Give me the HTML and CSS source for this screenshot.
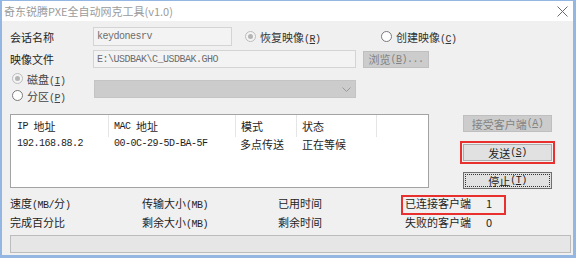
FILE: index.html
```html
<!DOCTYPE html>
<html>
<head>
<meta charset="utf-8">
<title>奇东锐腾PXE全自动网克工具</title>
<link rel="stylesheet" href="styles.css">
</head>
<body>
<div class="window">
  <div class="titlebar">
    <span class="title">奇东锐腾PXE全自动网克工具(v1.0)</span>
    <svg class="close" width="11" height="11" viewBox="0 0 11 11"><path d="M0.5 0.5 L10.5 10.5 M10.5 0.5 L0.5 10.5" stroke="#6a6a6a" stroke-width="1" fill="none"/></svg>
  </div>
  <div class="client">
    <div class="row r1">
      <span class="label">会话名称</span>
      <div class="edit w1"><span class="m">keydonesrv</span></div>
      <div class="radio rd-restore"><span class="dot dis checked"></span><span>恢复映像<span class="m">(<u>R</u>)</span></span></div>
      <div class="radio"><span class="dot"></span><span>创建映像<span class="m">(<u>C</u>)</span></span></div>
    </div>
    <div class="row r2">
      <span class="label">映像文件</span>
      <div class="edit w2"><span class="m">E:\USDBAK\C_USDBAK.GHO</span></div>
      <div class="btn disabled browse">浏览<span class="m">(<u>B</u>)...</span></div>
    </div>
    <div class="row r3">
      <div class="radios">
        <div class="radio sm"><span class="dot dis checked"></span><span class="grey">磁盘<span class="m">(<u>I</u>)</span></span></div>
        <div class="radio sm"><span class="dot"></span><span class="grey">分区<span class="m">(<u>P</u>)</span></span></div>
      </div>
      <div class="combo">
        <svg width="9" height="5" viewBox="0 0 9 5"><path d="M0.5 0.5 L4.5 4.5 L8.5 0.5" stroke="#9a9a9a" fill="none" stroke-width="1"/></svg>
      </div>
    </div>
    <div class="main">
      <div class="list">
        <div class="lv-row lv-head">
          <span class="c1"><span class="m">IP&nbsp;</span>地址</span>
          <span class="c2"><span class="m">MAC&nbsp;</span>地址</span>
          <span class="c3">模式</span>
          <span class="c4">状态</span>
        </div>
        <div class="lv-row lv-item">
          <span class="c1 m">192.168.88.2</span>
          <span class="c2 m">00-0C-29-5D-BA-5F</span>
          <span class="c3">多点传送</span>
          <span class="c4">正在等候</span>
        </div>
      </div>
      <div class="side">
        <div class="btn disabled accept">接受客户端<span class="m">(<u>A</u>)</span></div>
        <div class="btn send">发送<span class="m">(<u>S</u>)</span></div>
        <div class="btn stop"><span class="focus">停止<span class="m">(<u>T</u>)</span></span></div>
      </div>
    </div>
    <div class="stats">
      <span>速度<span class="m">(MB/</span>分<span class="m">)</span></span>
      <span>传输大小<span class="m">(MB)</span></span>
      <span>已用时间</span>
      <span class="pair hl"><span class="k">已连接客户端</span><span>1</span></span>
      <span>完成百分比</span>
      <span>剩余大小<span class="m">(MB)</span></span>
      <span>剩余时间</span>
      <span class="pair"><span class="k">失败的客户端</span><span>0</span></span>
    </div>
    <div class="progress"></div>
  </div>
</div>
</body>
</html>
```
FILE: styles.css
```css
* { box-sizing: border-box; margin: 0; padding: 0; }
html, body { width: 576px; height: 258px; overflow: hidden; background: #fff; }
body {
  font-family: "Noto Sans CJK SC", "Noto Sans", sans-serif;
  font-size: 11px;
  color: #1e1e1e;
}
u { text-decoration: underline; }
.m {
  font-family: "Liberation Mono", "Noto Sans CJK SC", monospace;
  font-size: 10px;
  letter-spacing: -0.5px;
}
.window {
  width: 576px;
  height: 258px;
  border-style: solid;
  border-color: #93b6e2;
  border-width: 1px 3px 3px 2px;
  display: flex;
  flex-direction: column;
}
.titlebar {
  height: 20px;
  flex: none;
  background: #fff;
  display: flex;
  align-items: center;
  justify-content: space-between;
  padding: 0 5px 0 2px;
}
.title { color: #9b9b9b; }
.close { display: block; }
.client {
  flex: 1;
  background: #f0f0f0;
  padding: 6px 0 0 8px;
  display: flex;
  flex-direction: column;
}
.row { display: flex; align-items: center; }
.label { width: 83px; flex: none; }
.r1 { height: 19px; }
.r2 { height: 18px; margin-top: 4px; }
.edit {
  height: 100%;
  background: #f3f3f3;
  border: 1px solid #d4d4d4;
  color: #6d6d6d;
  padding-left: 3px;
  display: flex;
  align-items: center;
}
.w1 { width: 139px; }
.w2 { width: 263px; }
.radio { display: flex; align-items: center; color: #333; }
.rd-restore { margin-left: 13px; width: 136px; }
.dot {
  width: 11px;
  height: 11px;
  border-radius: 50%;
  border: 1px solid #7a7a7a;
  background: #fff;
  margin-right: 4px;
  flex: none;
  display: flex;
  align-items: center;
  justify-content: center;
}
.dot.dis { border-color: #bcbcbc; background: #f4f4f4; }
.dot.checked::after {
  content: "";
  width: 5px;
  height: 5px;
  border-radius: 50%;
  background: #b5b5b5;
}
.btn {
  height: 17px;
  background: #e1e1e1;
  border: 1px solid #adadad;
  display: flex;
  align-items: center;
  justify-content: center;
  color: #1e1e1e;
}
.btn.disabled { background: #cccccc; border-color: #bfbfbf; color: #838383; }
.browse { width: 66px; margin-left: 7px; }
.r3 { height: 34px; margin-top: 2px; align-items: flex-start; }
.radios {
  width: 84px;
  flex: none;
  display: flex;
  flex-direction: column;
  padding-left: 2px;
}
.radio.sm { height: 17px; }
.grey { color: #444; }
.combo {
  width: 262px;
  height: 18px;
  margin-top: 10px;
  background: #cccccc;
  border: 1px solid #c4c4c4;
  display: flex;
  align-items: center;
  justify-content: flex-end;
  padding-right: 4px;
}
.combo svg { display: block; }
.main { display: flex; margin-top: 10px; height: 74px; }
.list {
  width: 419px;
  height: 74px;
  background: #fff;
  border: 1px solid #a3a3a3;
}
.lv-row {
  display: grid;
  grid-template-columns: 98px 127px 61px 80px;
}
.lv-head { height: 22px; }
.lv-head > span {
  border-right: 1px solid #e5e5e5;
  display: flex;
  align-items: center;
  padding-left: 5px;
}
.lv-head .c1 { padding-left: 6px; }
.lv-item { height: 14px; line-height: 14px; }
.lv-item span { padding-left: 5px; white-space: nowrap; }
.lv-item .c1 { padding-left: 6px; }
.lv-item .c3 { padding-left: 4px; }
.side {
  width: 89px;
  margin-left: 34px;
  display: flex;
  flex-direction: column;
}
.accept { margin-top: 1px; }
.send {
  margin-top: 12px;
  outline: 2px solid #e8312f;
  outline-offset: 1px;
}
.stop {
  margin-top: 11px;
  border-color: #6f6f6f;
  padding: 1px;
}
.focus {
  width: 100%;
  height: 100%;
  border: 1px dotted #333;
  display: flex;
  align-items: center;
  justify-content: center;
}
.stats {
  display: grid;
  grid-template-columns: 132px 136px 127px 1fr;
  grid-auto-rows: 19px;
  margin-top: 5px;
  align-items: center;
}
.pair { display: flex; }
.pair .k { width: 81px; }
.hl { position: relative; }
.hl::after {
  content: "";
  position: absolute;
  left: -4px;
  top: 0px;
  width: 101px;
  height: 16px;
  border: 2px solid #e8312f;
}
.progress {
  margin-top: 4px;
  width: 561px;
  height: 18px;
  background: #e6e6e6;
  border: 1px solid #bcbcbc;
}
```
